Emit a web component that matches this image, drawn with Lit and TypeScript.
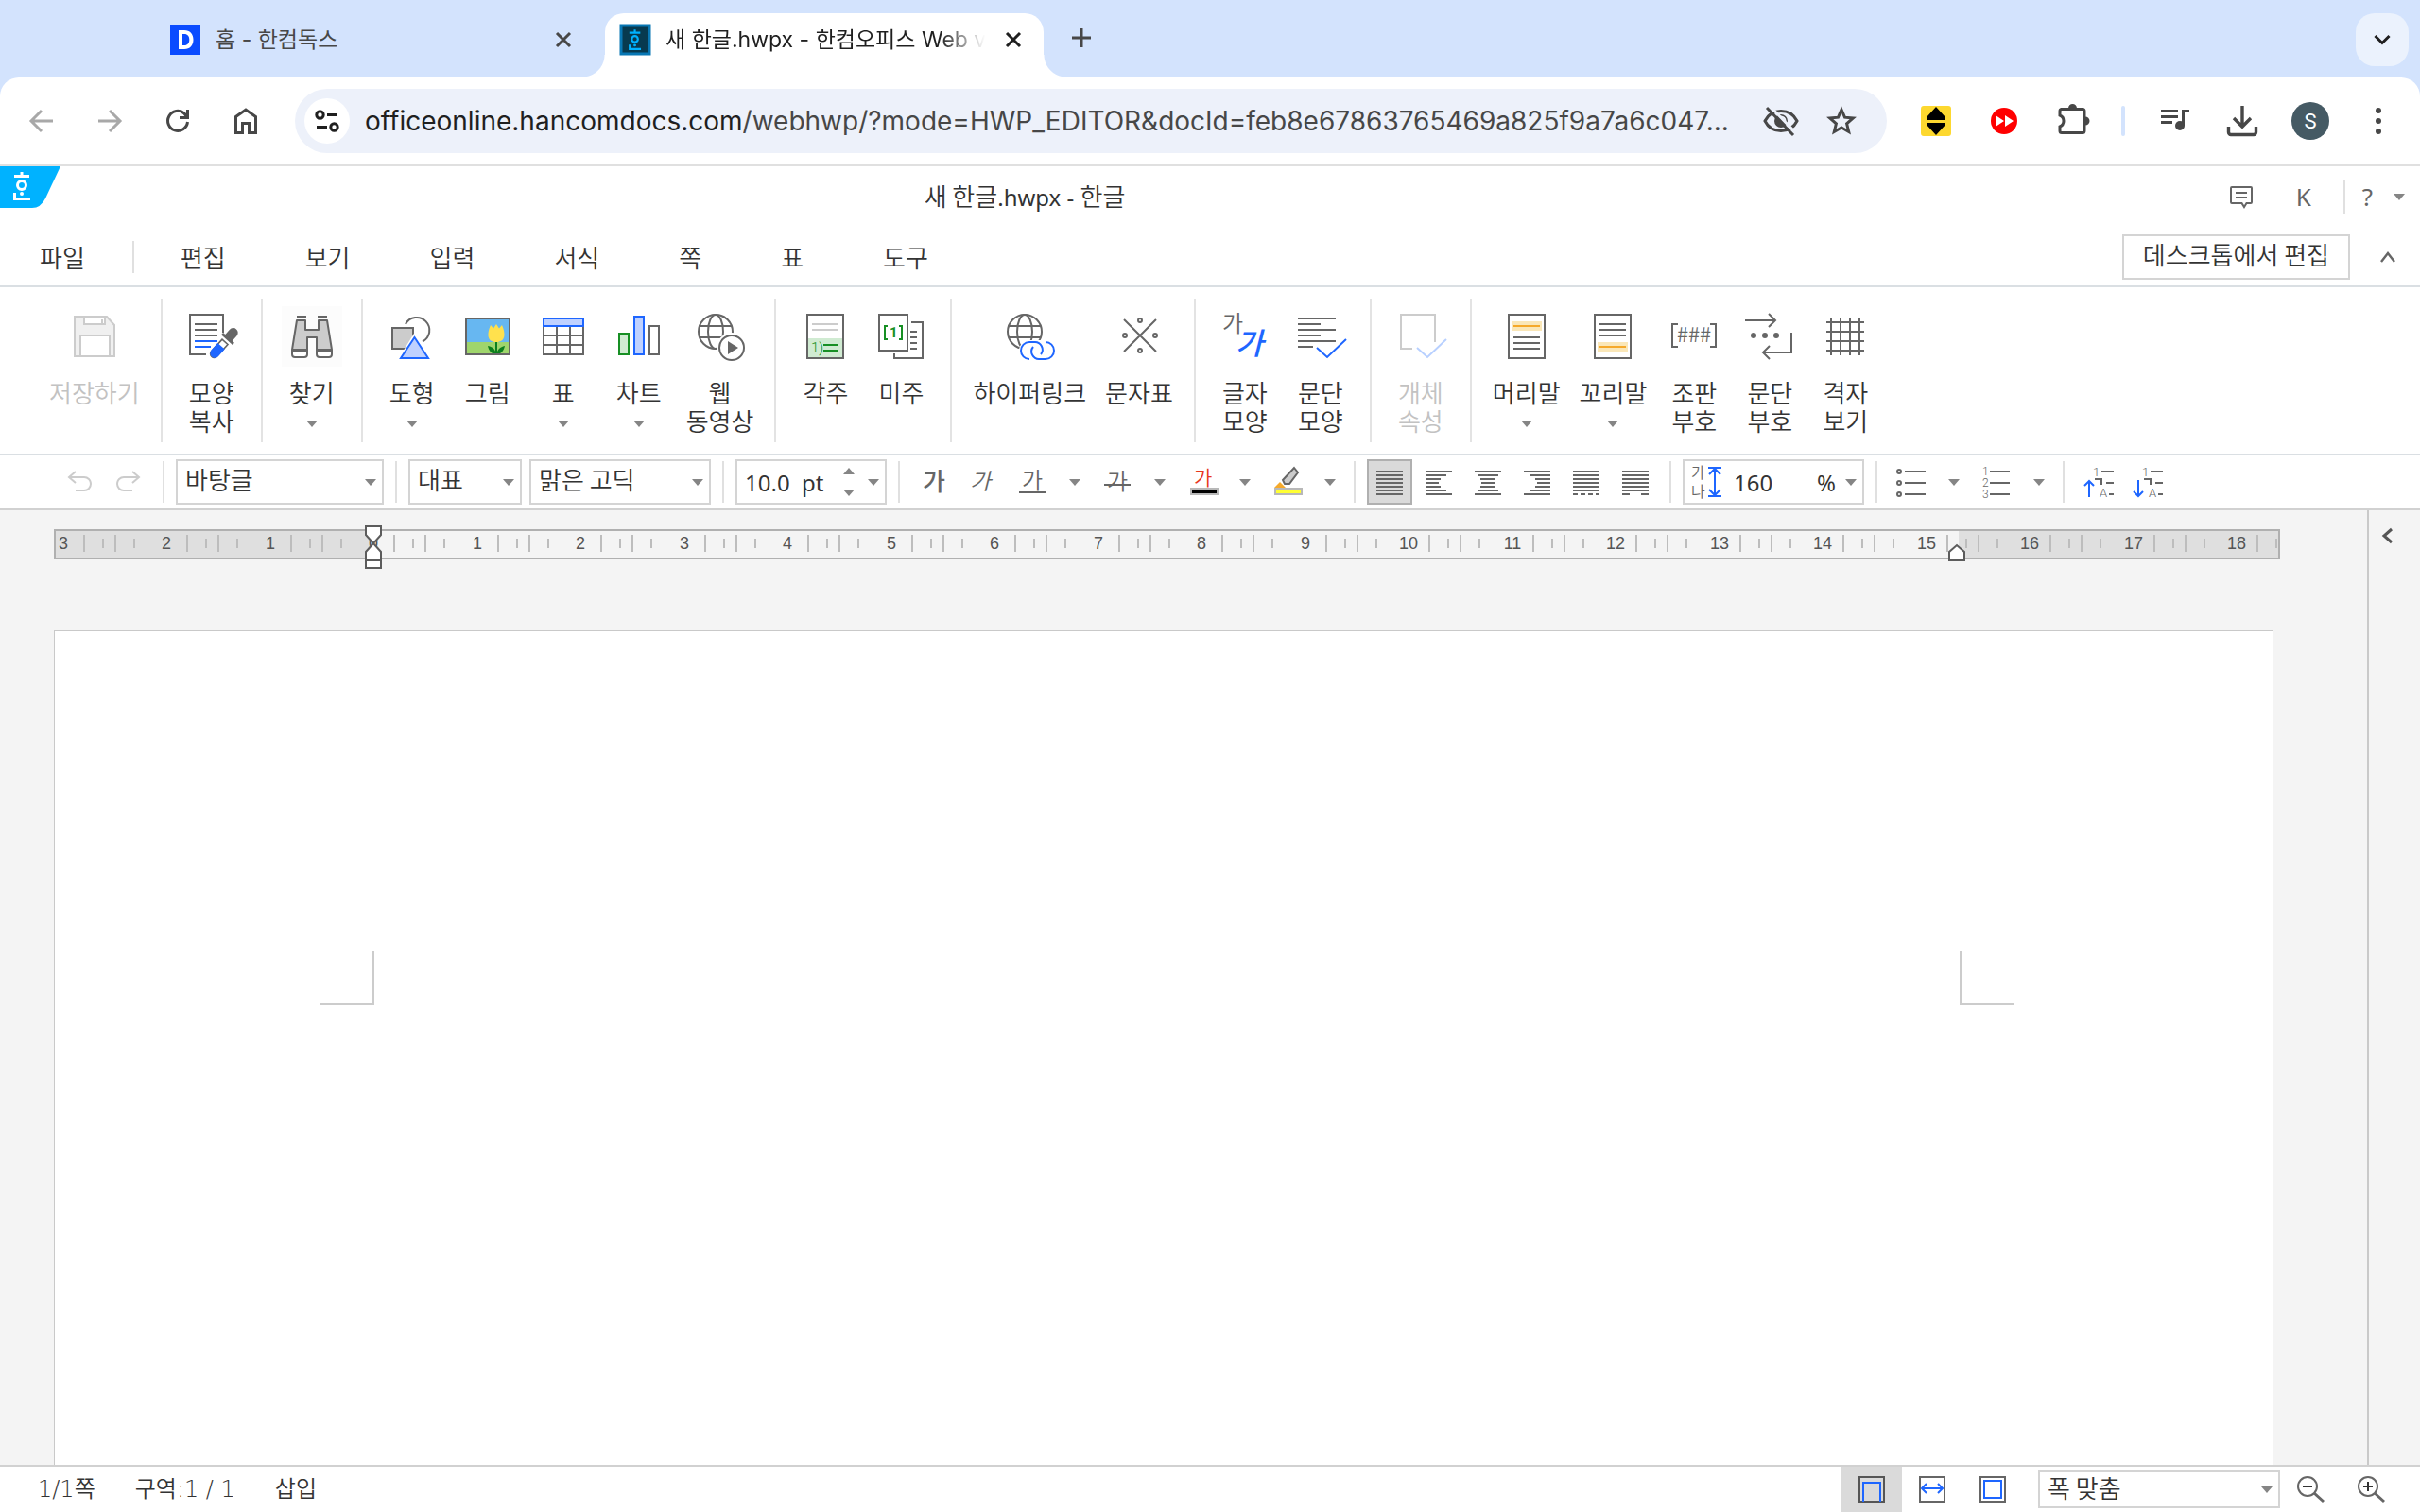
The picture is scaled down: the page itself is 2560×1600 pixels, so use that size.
import { LitElement, html, svg, css } from "lit";
import { customElement } from "lit/decorators.js";
import { classMap } from "lit/directives/class-map.js";

/* ---------- shared drawing helpers ---------- */

const GRAY = "#666";
const BLUE = "#1e66ff";

const hline = (x1: number, x2: number, y: number, color = GRAY, w = 2) =>
  svg`<path d="M${x1} ${y}H${x2}" stroke=${color} stroke-width=${w} fill="none" />`;

const caret = html`<svg class="caret" viewBox="0 0 12 8" aria-hidden="true"><path d="M0 1h12L6 8z" fill="#858585" /></svg>`;

const globe = svg`
  <g fill="none" stroke=${GRAY} stroke-width="2">
    <circle cx="27" cy="27" r="18" />
    <ellipse cx="27" cy="27" rx="8" ry="18" />
    <path d="M10 21H44M10 33H44" />
  </g>`;

/* ---------- ribbon icons, drawn on a 64 x 64 grid ---------- */

const ribbonIcons: Record<string, unknown> = {
  save: svg`<g fill="#f0f0f0" stroke="#ccc" stroke-width="2">
      <path d="M11 11H45L53 20V53H11z" />
      <path d="M21 11H43V19H21z" fill="#fff" /><path d="M40 14V19" />
      <path d="M17 31H48V53H17z" fill="#fff" /></g>`,
  copyShape: svg`<path d="M44 28V9H9V51H26" fill="none" stroke=${GRAY} stroke-width="2" />
      ${[19, 25, 31].map((y) => hline(14, 38, y))}${hline(14, 38, 37, BLUE)}${hline(14, 31, 43, BLUE)}
      <g transform="translate(-2 0) rotate(42 46 40)">
        <path d="M42 37V54a4 4 0 0 0 8 0V37z" fill="#fff" stroke=${GRAY} stroke-width="1.6" />
        <path d="M41 43V53a5 5 0 0 0 10 0V43z" fill=${BLUE} />
        <path d="M38 31H54V34H38z" fill=${GRAY} />
        <path d="M41 32V24a5 5 0 0 1 10 0V32z" fill=${GRAY} /></g>`,
  find: svg`<path d="M0 0H64V64H0z" fill="#fcfcfc" />
      <g fill="#ccc" stroke=${GRAY} stroke-width="2">
      <path d="M16 11H26M38 11H48" />
      <path d="M16 15H25V25H39V15H48L53 46H37V33H27V46H11z" stroke-linejoin="round" />
      <path d="M11 47H27V51a3 3 0 0 1-3 3H14a3 3 0 0 1-3-3z" fill="#fff" />
      <path d="M37 47H53V51a3 3 0 0 1-3 3H40a3 3 0 0 1-3-3z" fill="#fff" /></g>`,
  shapes: svg`<path d="M25 19A13.500 13.500 0 1 1 43 37.500" fill="none" stroke=${GRAY} stroke-width="2" />
      <path d="M11 23H33V45H11z" fill="#ccc" stroke=${GRAY} stroke-width="2" />
      <path d="M34.500 28 16 58H53z" fill="#fff" />
      <path d="M34.500 33 20 55H49z" fill="#bfd1ff" stroke=${BLUE} stroke-width="2" />`,
  picture: svg`<path d="M9 13H55V38H9z" fill="#67b7f1" /><path d="M9 38H55V51H9z" fill="#9fd56c" />
      <path d="M41 37V51" stroke="#0c7f1d" stroke-width="2" />
      <path d="M41 51C36 51 33 47 32 42C38 43 40 46 41 51C42 46 45 43 50 42C49 47 46 51 41 51z" fill="#0c7f1d" />
      <path d="M35 20 38 23.500 41 19 44 23.500 47 20C51 29 51 38 41 38S31 29 35 20z" fill="#ffe14d" />
      <path d="M9 13H55V51H9z" fill="none" stroke=${GRAY} stroke-width="2" />`,
  table: svg`<g fill="none" stroke=${GRAY} stroke-width="2"><path d="M11 21V51H53V21M25 21V51M39 21V51M11 31H53M11 41H53" /></g>
      <path d="M11 13H53V21H11z" fill="#bfd1ff" stroke=${BLUE} stroke-width="2" />`,
  chart: svg`<g stroke-width="2"><path d="M11 29H21V51H11z" fill="#d0ebd2" stroke="#178f24" />
      <path d="M27 11H37V51H27z" fill="#bfd1ff" stroke=${BLUE} />
      <path d="M43 21H53V51H43z" fill="#fff" stroke=${GRAY} /></g>`,
  webVideo: svg`${globe}<circle cx="44" cy="44" r="16" fill="#fff" />
      <circle cx="44" cy="44" r="13" fill="#fff" stroke=${GRAY} stroke-width="2" />
      <path d="M40 37 51 44 40 51z" fill=${GRAY} />`,
  footnote: svg`<path d="M13 34H51V55H13z" fill="#d0ebd2" />
      <path d="M13 9H51V55H13z" fill="none" stroke=${GRAY} stroke-width="2" />
      ${hline(18, 46, 19, "#ccc")}${hline(18, 46, 25, "#ccc")}${hline(30, 46, 41, "#178f24")}${hline(30, 46, 47, "#178f24")}
      <text class="tiny" x="17" y="49" font-size="15" fill="#178f24">1)</text>`,
  endnote: svg`<path d="M43 17H55V55H25V50" fill="none" stroke=${GRAY} stroke-width="2" />
      ${[27, 33, 39, 45].map((y) => hline(42, 49, y))}
      <path d="M9 9H39V47H9z" fill="#fff" stroke=${GRAY} stroke-width="2" />
      <path d="M18 21H15V35H18M30 21H33V35H30" fill="none" stroke="#178f24" stroke-width="2" />
      <text class="tiny" x="20" y="33" font-size="15" font-weight="700" fill="#178f24">1</text>`,
  hyperlink: svg`${globe}<rect x="21" y="36" width="38" height="24" rx="11" fill="#fff" />
      <g fill="none" stroke=${BLUE} stroke-width="2">
      <path d="M32 55a7.500 7.500 0 0 1 0-18H37a8 8 0 0 1 7 13" transform="translate(0 1)" />
      <path d="M49 38a7.500 7.500 0 0 1 0 18H43a8 8 0 0 1-7-13" /></g>`,
  charMap: svg`<g fill="none" stroke=${GRAY} stroke-width="2"><path d="M16 14 50 48M50 14 16 48" />
      <circle cx="33" cy="15" r="2" /><circle cx="33" cy="47" r="2" /><circle cx="17" cy="31" r="2" /><circle cx="49" cy="31" r="2" /></g>`,
  charShape: svg`<text x="8" y="27" font-size="24" fill=${GRAY}>가</text>
      <text x="22" y="51" font-size="32" font-style="italic" font-weight="500" fill=${BLUE}>가</text>`,
  paraShape: svg`${[48, 32, 48, 32, 48, 24].map((x, i) => hline(8, x, 13 + i * 6))}
      <path d="M28 44 39 54 59 35" fill="none" stroke=${BLUE} stroke-width="2" />`,
  objectProps: svg`<path d="M47 38V9H11V45H23" fill="none" stroke="#ccc" stroke-width="2" />
      <path d="M28 44 39 54 59 35" fill="none" stroke="#b8d0ff" stroke-width="2" />`,
  header: svg`<path d="M13 9H51V55H13z" fill="#fff" stroke=${GRAY} stroke-width="2" />
      <path d="M16 16H48V26H16z" fill="#fae7b8" />${hline(18, 46, 21, "#f5a92b")}
      ${[33, 39, 45].map((y) => hline(18, 46, y))}`,
  footer: svg`<path d="M13 9H51V55H13z" fill="#fff" stroke=${GRAY} stroke-width="2" />
      <path d="M16 38H48V48H16z" fill="#fae7b8" />${hline(18, 46, 43, "#f5a92b")}
      ${[19, 25, 31].map((y) => hline(18, 46, y))}`,
  controlCodes: svg`<path d="M15 19H9V43H15M49 19H55V43H49" fill="none" stroke=${GRAY} stroke-width="2" />
      <text x="32" y="38" font-size="22" text-anchor="middle" fill=${GRAY}>###</text>`,
  paraMarks: svg`<g fill="none" stroke=${GRAY} stroke-width="2"><path d="M6 15H38M31 8 38 15 31 22M55 28V49H25M32 42 25 49 32 56" /></g>
      <g fill=${GRAY}><circle cx="15" cy="31" r="3" /><circle cx="27" cy="31" r="3" /><circle cx="39" cy="31" r="3" /></g>`,
  grid: svg`<path d="M17 12V52M27 12V52M37 12V52M47 12V52M12 17H52M12 27H52M12 37H52M12 47H52" fill="none" stroke=${GRAY} stroke-width="2" />`,
};

interface RibbonItem {
  icon: string;
  lines: string[];
  menu?: boolean;
  disabled?: boolean;
}

const ribbonGroups: RibbonItem[][] = [
  [{ icon: "save", lines: ["저장하기"], disabled: true }],
  [{ icon: "copyShape", lines: ["모양", "복사"] }],
  [{ icon: "find", lines: ["찾기"], menu: true }],
  [
    { icon: "shapes", lines: ["도형"], menu: true },
    { icon: "picture", lines: ["그림"] },
    { icon: "table", lines: ["표"], menu: true },
    { icon: "chart", lines: ["차트"], menu: true },
    { icon: "webVideo", lines: ["웹", "동영상"] },
  ],
  [
    { icon: "footnote", lines: ["각주"] },
    { icon: "endnote", lines: ["미주"] },
  ],
  [
    { icon: "hyperlink", lines: ["하이퍼링크"] },
    { icon: "charMap", lines: ["문자표"] },
  ],
  [
    { icon: "charShape", lines: ["글자", "모양"] },
    { icon: "paraShape", lines: ["문단", "모양"] },
  ],
  [{ icon: "objectProps", lines: ["개체", "속성"], disabled: true }],
  [
    { icon: "header", lines: ["머리말"], menu: true },
    { icon: "footer", lines: ["꼬리말"], menu: true },
    { icon: "controlCodes", lines: ["조판", "부호"] },
    { icon: "paraMarks", lines: ["문단", "부호"] },
    { icon: "grid", lines: ["격자", "보기"] },
  ],
];

/* ---------- format bar icons, drawn on a 40 x 40 grid ---------- */

const alignWidths = [28, 22, 16, 14, 16, 22, 28];
const full = Array(7).fill(28);
const alignRows = (widths: number[], place: (w: number) => number) =>
  widths.map((w, i) => hline(place(w), place(w) + w, 9 + i * 4));

const outline = svg`<g font-size="13" fill=${GRAY}><text class="tiny" x="14" y="14">1</text><text class="tiny" x="21" y="36">A</text></g>
  <path d="M23 9H36M16 17H23V23M28 21H36M31 33H36" fill="none" stroke=${GRAY} stroke-width="2" />`;

const formatIcons: Record<string, unknown> = {
  undo: svg`<path d="M16 9 9 15 16 21M9 15H25a7 7 0 0 1 0 14H16" fill="none" stroke="#ccc" stroke-width="2" />`,
  redo: svg`<path d="M24 9 31 15 24 21M31 15H15a7 7 0 0 0 0 14H24" fill="none" stroke="#ccc" stroke-width="2" />`,
  bold: svg`<text x="8" y="29" font-size="26" font-weight="500" fill=${GRAY}>가</text>`,
  italic: svg`<text x="6" y="28" font-size="24" font-style="italic" fill=${GRAY}>가</text>`,
  underline: svg`<text x="9" y="27" font-size="24" fill=${GRAY}>가</text>${hline(6, 34, 31)}`,
  strike: svg`<text x="9" y="28" font-size="24" fill=${GRAY}>가</text>${hline(6, 34, 23)}`,
  color: svg`<text x="11" y="23" font-size="21" fill="#e8361c">가</text>
      <path d="M8 27H36V33H8z" fill="#000" stroke="#b8b8b8" stroke-width="2" />`,
  highlight: svg`<path d="M27 5 31 10 22 22 17 22 15 18z" fill="#ccc" stroke=${GRAY} stroke-width="2" />
      <path d="M6 26 12 20 18 26z" fill="#f5a92b" />
      <path d="M7 27H35V33H7z" fill="#ffff33" stroke="#b8b8b8" stroke-width="2" />`,
  justify: svg`${alignRows(full, () => 6)}`,
  left: svg`${alignRows(alignWidths, () => 6)}`,
  center: svg`${alignRows(alignWidths, (w) => 20 - w / 2)}`,
  right: svg`${alignRows(alignWidths, (w) => 34 - w)}`,
  distribute: svg`${alignRows(full.slice(1), () => 6)}<path d="M6 33H34" stroke=${GRAY} stroke-width="2" stroke-dasharray="5 3" />`,
  divide: svg`${alignRows(full.slice(1), () => 6)}${hline(6, 14, 33)}${hline(26, 34, 33)}`,
  spacing: svg`<g font-size="16" fill=${GRAY}><text x="3" y="16">가</text><text x="3" y="36">나</text></g>
      <path d="M21 5H35M21 35H35M28 6V34M22 12 28 6 34 12M22 28 28 34 34 28" fill="none" stroke=${BLUE} stroke-width="2" />`,
  bullets: svg`${[9, 21, 33].map((y) => svg`<circle cx="7" cy=${y} r="2" fill="none" stroke=${GRAY} stroke-width="2" />${hline(13, 35, y)}`)}`,
  numbers: svg`${[9, 21, 33].map((y, i) => svg`<text class="tiny" x="5" y=${y + 4} font-size="12" fill=${GRAY}>${i + 1}</text>${hline(13, 34, y)}`)}`,
  levelUp: svg`${outline}<path d="M10 36V19M5 24 10 19 15 24" fill="none" stroke=${BLUE} stroke-width="2" />`,
  levelDown: svg`${outline}<path d="M10 18V35M5 30 10 35 15 30" fill="none" stroke=${BLUE} stroke-width="2" />`,
};

/* ---------- browser icons, drawn on a 40 x 40 grid ---------- */

const chromeIcons: Record<string, unknown> = {
  back: svg`<path d="M32 20H10M20 9 9 20 20 31" fill="none" stroke="#a8a8a8" stroke-width="3" />`,
  forward: svg`<path d="M8 20H30M20 9 31 20 20 31" fill="none" stroke="#a8a8a8" stroke-width="3" />`,
  reload: svg`<path d="M30.500 21A10.500 10.500 0 1 1 27 12L30 16" fill="none" stroke="#474747" stroke-width="3" /><path d="M30.500 8V16.500H22" fill="none" stroke="#474747" stroke-width="3" />`,
  home: svg`<path d="M9.500 15.500 20 8 30.500 15.500V32.500H23.500V22.500H16.500V32.500H9.500z" fill="none" stroke="#474747" stroke-width="3" />`,
  site: svg`<g fill="none" stroke="#1f1f1f" stroke-width="3"><circle cx="12.500" cy="13.500" r="3.700" /><circle cx="27.500" cy="26.500" r="3.700" /><path d="M20 13.500H31M9 26.500H20" /></g>`,
  hidden: svg`<path d="M3 20C7 12 13 9.500 20 9.500S33 12 37 20C33 28 27 30.500 20 30.500S7 28 3 20z" fill="none" stroke="#474747" stroke-width="3" />
      <circle cx="20" cy="20" r="7" fill="#474747" /><path d="M20 15.500a4.500 4.500 0 0 1 4.500 4.500" fill="none" stroke="#edf1fa" stroke-width="2" />
      <path d="M8 4 36 33" stroke="#edf1fa" stroke-width="3" /><path d="M5 6 33 35" stroke="#474747" stroke-width="3" />`,
  star: svg`<path d="M20 8 23.500 16.200 32.300 17 25.600 22.800 27.700 31.500 20 26.900 12.300 31.500 14.400 22.800 7.700 17 16.500 16.200z" fill="none" stroke="#474747" stroke-width="3" />`,
  yellow: svg`<rect x="4" y="4" width="32" height="32" rx="3" fill="#fdd82f" /><path d="M20 5 30 16V19H10V16zM10 22H30V24L20 35 10 24z" fill="#000" />`,
  red: svg`<circle cx="20" cy="20" r="14" fill="#f00" /><path d="M11 14 20 20 11 26zM21 14 30 20 21 26z" fill="#fff" />`,
  puzzle: svg`<path d="M8 7.500H31a2 2 0 0 1 2 2V30.500a2 2 0 0 1-2 2H9a2 2 0 0 1-2-2V26a6.500 6.500 0 0 0 0-12V9.500a2 2 0 0 1 2-2z" fill="none" stroke="#474747" stroke-width="3" />
      <path d="M16 6.500a4.500 4.500 0 0 1 9 0zM34 15.500a4.500 4.500 0 0 1 0 9z" fill="#474747" />`,
  music: svg`<path d="M6 9.500H24M6 15.500H24M6 21.500H18M29.500 25V9.500H36" fill="none" stroke="#474747" stroke-width="3" /><circle cx="26" cy="25" r="5" fill="#474747" />`,
  download: svg`<path d="M20 4V25M11 17 20 26 29 17M5.500 26V32a2.500 2.500 0 0 0 2.500 2.500H32a2.500 2.500 0 0 0 2.500-2.500V26" fill="none" stroke="#474747" stroke-width="3.400" />`,
  more: svg`<g fill="#474747"><circle cx="20" cy="9" r="3" /><circle cx="20" cy="20" r="3" /><circle cx="20" cy="31" r="3" /></g>`,
  close: svg`<path d="M13 13 27 27M27 13 13 27" stroke="currentColor" stroke-width="3" />`,
  plus: svg`<path d="M20 10V30M10 20H30" stroke="#474747" stroke-width="3" />`,
  down: svg`<path d="M12.500 16 20 23.500 27.500 16" fill="none" stroke="#1f1f1f" stroke-width="3" />`,
  comment: svg`<path d="M10 10H30a1 1 0 0 1 1 1V26a1 1 0 0 1-1 1H25.500L23 31 20.500 27H10a1 1 0 0 1-1-1V11a1 1 0 0 1 1-1zM14 16H26M14 21H26" fill="none" stroke=${GRAY} stroke-width="2" />`,
  collapse: svg`<path d="M13 25 20 16 27 25" fill="none" stroke=${GRAY} stroke-width="2.400" />`,
  sideOpen: svg`<path d="M24 12 16 19 24 26" fill="none" stroke="#555" stroke-width="3" />`,
  pageView: svg`<path d="M7 7H33V33H7z" fill="none" stroke="#555" stroke-width="2" /><path d="M11 33V13H29V33" fill="none" stroke=${BLUE} stroke-width="2" />`,
  fitWidth: svg`<path d="M7 7H33V33H7z" fill="none" stroke=${GRAY} stroke-width="2" /><path d="M10 19H30M14 14 9 19 14 24M26 14 31 19 26 24" fill="none" stroke=${BLUE} stroke-width="2" />`,
  fitPage: svg`<path d="M7 7H33V33H7z" fill="none" stroke=${GRAY} stroke-width="2" /><path d="M11 11H29V29H11z" fill="none" stroke=${BLUE} stroke-width="2" />`,
  zoomOut: svg`<circle cx="17" cy="17" r="10" fill="none" stroke=${GRAY} stroke-width="2" /><path d="M24 24 34 33" stroke=${GRAY} stroke-width="3" /><path d="M12 17H22" stroke="#333" stroke-width="2" />`,
  zoomIn: svg`<circle cx="17" cy="17" r="10" fill="none" stroke=${GRAY} stroke-width="2" /><path d="M24 24 34 33" stroke=${GRAY} stroke-width="3" /><path d="M12 17H22M17 12V22" stroke="#333" stroke-width="2" />`,
};

const icon40 = (drawing: unknown) => html`<svg class="i40" viewBox="0 0 40 40" aria-hidden="true">${drawing}</svg>`;

/** The syllable mark shared by the tab icon and the application badge. */
const hanMark = (color: string) => svg`<g fill="none" stroke=${color} stroke-width="3">
  <path d="M23 6V11M15 10.500H31" /><circle cx="23" cy="20" r="4.500" /><path d="M15.500 28V34.500H32" /></g>
  <circle cx="23" cy="29" r="2" fill=${color} />`;

const menus = ["편집", "보기", "입력", "서식", "쪽", "표", "도구"];

/* ---------- ruler ---------- */

const CM = 1095; // tenths of a pixel per centimetre
const ZERO = 338; // distance of the zero mark from the ruler's left edge
const RIGHT_MARGIN = 2015;

const rulerX = (offset: number, cm: number) => ZERO + Math.round((cm * CM) / 10) + offset;

@customElement("hwp-ruler")
class HwpRuler extends LitElement {
  static styles = css`
    :host { display: block; }
    .ruler { display: block; width: 100%; height: 56px; overflow: visible; }
    .num { font: 18px "Liberation Sans", Arial, sans-serif; fill: #555; text-anchor: middle; }
  `;

  render() {
    const cms = Array.from({ length: 22 }, (_, i) => i - 3);
    return html`<svg class="ruler" role="img" aria-label="눈금자">
      <svg y="12" width="100%" height="32">
        <rect width="100%" height="32" fill="#f4f4f4" />
        <rect width=${ZERO} height="32" fill="#dfdfdf" />
        <rect x=${RIGHT_MARGIN} width="100%" height="32" fill="#dfdfdf" />
        ${cms.map(
          (cm) => svg`
            <path d="M${rulerX(22, cm)} 6v18M${rulerX(55, cm)} 6v18M${rulerX(42, cm)} 10v10M${rulerX(75, cm)} 10v10" stroke="#bdbdbd" stroke-width="2" />
            <text class="num" x=${rulerX(0, cm)} y="21">${Math.abs(cm)}</text>`
        )}
        <rect width="100%" height="32" fill="none" stroke="#b0b0b0" stroke-width="4" />
      </svg>
      <g fill="#fff" stroke="#5c5c5c" stroke-width="2">
        <path d="M330 9H346V18L338 27 330 18z" />
        <path d="M330 45V36L338 27 346 36V45z" />
        <path d="M330 45H346V53H330z" />
        <path d="M2005 45V36L2013 29 2021 36V45z" />
      </g>
    </svg>`;
  }
}

@customElement("app-root")
class AppRoot extends LitElement {
  static styles = css`
    :host {
      display: flex; flex-direction: column; height: 100vh; overflow: hidden;
      background: #fff; color: #333;
      font: 350 26px/30px "Noto Sans CJK KR", "Noto Sans", sans-serif;
    }
    * { box-sizing: border-box; }
    button, input, select { font: inherit; color: inherit; margin: 0; padding: 0; border: 0; background: none; border-radius: 0; outline: 0; }
    button { display: flex; align-items: center; justify-content: center; flex: none; }
    svg { display: block; flex: none; overflow: visible; }
    svg text { font-family: "Noto Sans CJK KR", sans-serif; }
    svg .tiny { font-family: Roboto, sans-serif; }
    .i40 { width: 40px; height: 40px; }
    .caret { width: 12px; height: 8px; }

    /* tab strip */
    .tabs { display: flex; align-items: flex-end; flex: none; height: 82px; padding: 0 12px 0 164px; background: #d3e3fd; }
    .tab { position: relative; display: flex; align-items: center; height: 68px; padding: 0 12px 12px 16px; color: #474747; font-family: Inter, "Noto Sans CJK KR", sans-serif; font-size: 23px; font-weight: 400; }
    .tab.idle { width: 476px; padding-right: 24px; }
    .tab.active { width: 464px; background: #fff; border-radius: 20px 20px 0 0; color: #1f1f1f; }
    .tab.active::before, .tab.active::after { content: ""; position: absolute; bottom: 0; width: 24px; height: 24px; }
    .tab.active::before { left: -24px; background: radial-gradient(circle at 0 0, #d3e3fd 23px, #fff 24px); }
    .tab.active::after { right: -24px; background: radial-gradient(circle at 100% 0, #d3e3fd 23px, #fff 24px); }
    .favicon { width: 32px; height: 32px; margin-right: 16px; }
    .tabname { flex: 1; min-width: 0; overflow: hidden; white-space: nowrap; color: inherit; text-decoration: none; }
    .active .tabname { margin-right: 8px; -webkit-mask-image: linear-gradient(90deg, #000 290px, transparent 338px); mask-image: linear-gradient(90deg, #000 290px, transparent 338px); }
    .newtab { height: 68px; margin-left: 20px; padding-bottom: 16px; }
    .grow { flex: 1; }
    .tabsearch { width: 56px; height: 56px; margin-bottom: 12px; border-radius: 20px; background: #ebf2fd; }

    /* address bar */
    .corners { flex: none; background: #d3e3fd; }
    .toolbar { display: flex; align-items: center; height: 94px; padding: 0 24px; border-radius: 20px 20px 0 0; border-bottom: 2px solid #e0e0e0; background: #fff; }
    .nav { display: flex; gap: 32px; margin-right: 32px; }
    .address { display: flex; align-items: center; flex: 1; min-width: 0; height: 68px; padding: 0 28px 0 10px; border-radius: 34px; background: #edf1fa; font-family: Inter, sans-serif; font-size: 28px; font-weight: 400; color: #1f1f1f; }
    .site { width: 48px; height: 48px; margin-right: 16px; border-radius: 50%; background: #fff; }
    .path { flex: 1; min-width: 0; color: #474747; }
    .addricons { display: flex; gap: 24px; margin-left: 16px; }
    .exts { display: flex; align-items: center; gap: 32px; margin-left: 32px; }
    .extsep { width: 4px; height: 32px; border-radius: 2px; background: #d3e3fd; }
    .avatar { width: 40px; height: 40px; border-radius: 50%; background: #455a64; color: #fff; font: 22px Roboto, sans-serif; }

    /* document header */
    .header { display: flex; flex: none; height: 66px; }
    .badge { width: 64px; height: 44px; }
    .title { flex: 1; margin: 0; font-size: 26px; font-weight: inherit; line-height: 62px; text-align: center; }
    .latin { font: 400 24px "Noto Sans", sans-serif; }
    .account { display: flex; align-items: center; justify-content: flex-end; width: 456px; height: 64px; padding-right: 16px; color: #666; font: 26px "Noto Sans", sans-serif; }
    .account button { min-width: 40px; margin-right: 26px; }
    .account .help { gap: 22px; margin: 0 0 0 18px; min-width: 0; }
    .account .rule { margin-left: -4px; }
    .rule { width: 2px; height: 36px; background: #e0e0e0; }
    .menubar { display: flex; align-items: center; flex: none; height: 62px; padding: 0 14px 0 0; border-bottom: 2px solid #dadfe3; }
    .menubar button { height: 50px; padding: 0 42px; white-space: nowrap; }
    .menubar .rule { height: 34px; margin: 0 7px 0 8px; }
    .menubar .desktop { height: 48px; margin-right: 20px; padding: 0 20px 6px; border: 2px solid #d4d4d4; }
    .menubar .collapse { padding: 0; height: 40px; }

    /* ribbon */
    .ribbon { display: flex; flex: none; height: 178px; padding: 12px 30px; border-bottom: 2px solid #dadfe3; }
    .group { display: flex; padding: 0 12px; height: 152px; }
    .group + .group { border-left: 2px solid #e3e3e3; }
    .tool { flex-direction: column; justify-content: flex-start; min-width: 80px; padding: 8px 10px 0; white-space: nowrap; }
    .tool svg { width: 64px; height: 64px; margin: 0 -2px 12px; }
    .tool .caret { width: 12px; height: 8px; margin: 14px 0 0; }
    .tool.disabled { color: #c2c2c2; }

    /* format bar */
    .format { display: flex; align-items: center; flex: none; height: 58px; padding: 0 60px; border-bottom: 2px solid #d1d1d1; }
    .format .rule { height: 44px; flex: none; margin: 0 12px; }
    .set { display: flex; gap: 4px; }
    .set.menus { margin-right: -4px; }
    .fb { width: 48px; height: 48px; }
    .fb.on { background: #dadada; border: 2px solid #b0b0b0; }
    .drop { width: 34px; height: 48px; }
    .field { display: flex; align-items: center; flex: none; height: 48px; border: 2px solid #d4d4d4; background: #fff; }
    .pick { display: grid; align-items: center; }
    .pick select { grid-area: 1 / 1; width: 100%; height: 100%; padding: 0 0 6px 8px; appearance: none; }
    .pick .caret { grid-area: 1 / 1; justify-self: end; margin-right: 6px; pointer-events: none; }
    .style { width: 220px; }
    .lang { width: 120px; margin-right: 8px; }
    .face { width: 192px; }
    .size { width: 160px; padding-left: 8px; }
    .size input, .spacing input, .unit { font: 400 24px "Noto Sans", sans-serif; }
    .size input { width: 60px; }
    .size .unit { width: 44px; }
    .spin { display: flex; flex-direction: column; gap: 14px; margin-right: 14px; }
    .spin button { width: 12px; height: 8px; }
    .up { transform: rotate(180deg); }
    .spacing { width: 192px; padding-left: 4px; }
    .spacing input { width: 88px; margin-left: 8px; }
    .spacing .unit { width: 30px; }

    /* editing area */
    .work { display: flex; flex: 1; min-height: 0; background: #f4f4f4; }
    .canvas { flex: 1; min-width: 0; padding: 8px 92px 0 57px; overflow: hidden; }
    .page { display: flex; justify-content: space-between; height: 1600px; margin: 63px 7px 0 0; padding: 338px 274px 0 281px; border: 1px solid #c9c9c9; background: #fff; }
    .mark { width: 57px; height: 57px; border: 0 solid #ccc; border-bottom-width: 2px; }
    .mark.l { border-right-width: 2px; }
    .mark.r { border-left-width: 2px; }
    .side { width: 56px; padding-top: 8px; border-left: 2px solid #c9c9c9; }

    /* status bar */
    .status { display: flex; align-items: center; flex: none; height: 50px; padding: 0 32px 0 40px; border-top: 2px solid #d1d1d1; font-family: "DejaVu Sans", "Noto Sans CJK KR", sans-serif; font-size: 24px; white-space: pre; }
    .status p { margin: 0 42px 0 0; }
    .view { width: 64px; height: 48px; }
    .view.on { background: #dadada; }
    .zoom { width: 256px; height: 40px; margin-left: 16px; font-family: "Noto Sans CJK KR", sans-serif; font-size: 26px; }
    .zoom select { padding-bottom: 4px; }
    .mag { width: 64px; height: 48px; }
    .mag + .mag { margin-right: -12px; }
  `;

  private fmt(name: string, label: string, on = false) {
    return html`<button class=${classMap({ fb: true, on })} aria-label=${label} ?disabled=${name === "undo" || name === "redo"}>${icon40(formatIcons[name])}</button>`;
  }

  private drop(label: string) {
    return html`<button class="drop" aria-label=${label}>${caret}</button>`;
  }

  private pick(cls: string, label: string, value: string) {
    return html`<div class="field pick ${cls}"><select aria-label=${label}><option>${value}</option></select>${caret}</div>`;
  }

  private chrome(name: string, label: string) {
    return html`<button aria-label=${label}>${icon40(chromeIcons[name])}</button>`;
  }

  private tool(t: RibbonItem) {
    return html`<button class=${classMap({ tool: true, disabled: !!t.disabled })} ?disabled=${!!t.disabled}>
      <svg viewBox="0 0 64 64" aria-hidden="true">${ribbonIcons[t.icon]}</svg>
      ${t.lines.map((l) => html`<span>${l}</span>`)}${t.menu ? caret : ""}
    </button>`;
  }

  render() {
    return html`
      <nav class="tabs" aria-label="탭">
        <div class="tab idle">
          <svg class="favicon" viewBox="0 0 32 32" aria-hidden="true"><rect width="32" height="32" fill="#0a4bff" />
            <path d="M9 6H15C21 6 24.500 10 24.500 16S21 26 15 26H9zM13 10V22H15C18.500 22 20.300 19.500 20.300 16S18.500 10 15 10z" fill="#fff" fill-rule="evenodd" /></svg>
          <a class="tabname" href="#home">홈 - 한컴독스</a>
          ${this.chrome("close", "탭 닫기")}
        </div>
        <div class="tab active">
          <svg class="favicon" viewBox="0 0 32 32" aria-hidden="true"><rect x="1" y="1" width="30" height="30" fill="#073a50" stroke="#0877b4" stroke-width="3" />
            <g transform="translate(-1 1) scale(.72)">${hanMark("#00b2ff")}</g></svg>
          <a class="tabname" href="#doc">새 한글.hwpx - 한컴오피스 Web v</a>
          ${this.chrome("close", "탭 닫기")}
        </div>
        <button class="newtab" aria-label="새 탭">${icon40(chromeIcons.plus)}</button>
        <span class="grow"></span>
        <button class="tabsearch" aria-label="탭 검색">${icon40(chromeIcons.down)}</button>
      </nav>

      <div class="corners"><div class="toolbar">
        <div class="nav">
          ${this.chrome("back", "뒤로")}${this.chrome("forward", "앞으로")}${this.chrome("reload", "새로고침")}${this.chrome("home", "홈")}
        </div>
        <div class="address">
          <button class="site" aria-label="사이트 정보">${icon40(chromeIcons.site)}</button>
          <label for="url">officeonline.hancomdocs.com</label>
          <input class="path" id="url" .value=${"/webhwp/?mode=HWP_EDITOR&docId=feb8e67863765469a825f9a7a6c047..."} />
          <div class="addricons">${this.chrome("hidden", "추적 차단")}${this.chrome("star", "북마크")}</div>
        </div>
        <div class="exts">
          ${this.chrome("yellow", "스크롤 확장")}${this.chrome("red", "재생 확장")}${this.chrome("puzzle", "확장 프로그램")}
          <span class="extsep"></span>
          ${this.chrome("music", "미디어")}${this.chrome("download", "다운로드")}
          <button class="avatar" aria-label="프로필">S</button>
          ${this.chrome("more", "더보기")}
        </div>
      </div></div>

      <header class="header">
        <svg class="badge" viewBox="0 0 64 44" aria-hidden="true"><path d="M0 0H64L48 34Q43 44 34 44H0z" fill="#00b2ff" />${hanMark("#fff")}</svg>
        <h1 class="title">새 한글<span class="latin">.hwpx - </span>한글</h1>
        <div class="account">
          <button aria-label="메모">${icon40(chromeIcons.comment)}</button>
          <button>K</button>
          <span class="rule"></span>
          <button class="help">?${caret}</button>
        </div>
      </header>

      <nav class="menubar" aria-label="메뉴">
        <button>파일</button><span class="rule"></span>
        ${menus.map((m) => html`<button>${m}</button>`)}
        <span class="grow"></span>
        <button class="desktop">데스크톱에서 편집</button>
        <button class="collapse" aria-label="접기">${icon40(chromeIcons.collapse)}</button>
      </nav>

      <section class="ribbon" aria-label="도구 상자">
        ${ribbonGroups.map((g) => html`<div class="group">${g.map((t) => this.tool(t))}</div>`)}
      </section>

      <section class="format" aria-label="서식 도구">
        <div class="set">${this.fmt("undo", "되돌리기")}${this.fmt("redo", "다시 실행")}</div>
        <span class="rule"></span>
        ${this.pick("style", "스타일", "바탕글")}
        <span class="rule"></span>
        ${this.pick("lang", "언어", "대표")}${this.pick("face", "글꼴", "맑은 고딕")}
        <span class="rule"></span>
        <div class="field size">
          <input aria-label="글자 크기" .value=${"10.0"} /><span class="unit">pt</span>
          <span class="spin"><button class="up" aria-label="크게">${caret}</button><button aria-label="작게">${caret}</button></span>
          <button aria-label="크기 목록">${caret}</button>
        </div>
        <span class="rule"></span>
        <div class="set menus">
          ${this.fmt("bold", "진하게")}${this.fmt("italic", "기울임")}
          ${this.fmt("underline", "밑줄")}${this.drop("밑줄 종류")}
          ${this.fmt("strike", "취소선")}${this.drop("취소선 종류")}
          ${this.fmt("color", "글자 색")}${this.drop("글자 색 목록")}
          ${this.fmt("highlight", "형광펜")}${this.drop("형광펜 목록")}
        </div>
        <span class="rule"></span>
        <div class="set">
          ${this.fmt("justify", "양쪽 정렬", true)}${this.fmt("left", "왼쪽 정렬")}${this.fmt("center", "가운데 정렬")}
          ${this.fmt("right", "오른쪽 정렬")}${this.fmt("distribute", "배분 정렬")}${this.fmt("divide", "나눔 정렬")}
        </div>
        <span class="rule"></span>
        <div class="field spacing">
          ${icon40(formatIcons.spacing)}
          <input aria-label="줄 간격" .value=${"160"} /><span class="unit">%</span>
          <button aria-label="줄 간격 목록">${caret}</button>
        </div>
        <span class="rule"></span>
        <div class="set menus">
          ${this.fmt("bullets", "글머리표")}${this.drop("글머리표 목록")}${this.fmt("numbers", "문단 번호")}${this.drop("문단 번호 목록")}
        </div>
        <span class="rule"></span>
        <div class="set">${this.fmt("levelUp", "한 수준 증가")}${this.fmt("levelDown", "한 수준 감소")}</div>
      </section>

      <main class="work">
        <div class="canvas">
          <hwp-ruler></hwp-ruler>
          <div class="page"><span class="mark l"></span><span class="mark r"></span></div>
        </div>
        <aside class="side">${this.chrome("sideOpen", "작업 창 열기")}</aside>
      </main>

      <footer class="status">
        <p>1/1쪽</p><p>구역:1 / 1</p><p>삽입</p>
        <span class="grow"></span>
        <button class="view on" aria-label="쪽 윤곽">${icon40(chromeIcons.pageView)}</button>
        <button class="view" aria-label="폭 맞춤">${icon40(chromeIcons.fitWidth)}</button>
        <button class="view" aria-label="쪽 맞춤">${icon40(chromeIcons.fitPage)}</button>
        ${this.pick("zoom", "확대 비율", "폭 맞춤")}
        <button class="mag" aria-label="축소">${icon40(chromeIcons.zoomOut)}</button>
        <button class="mag" aria-label="확대">${icon40(chromeIcons.zoomIn)}</button>
      </footer>
    `;
  }
}
